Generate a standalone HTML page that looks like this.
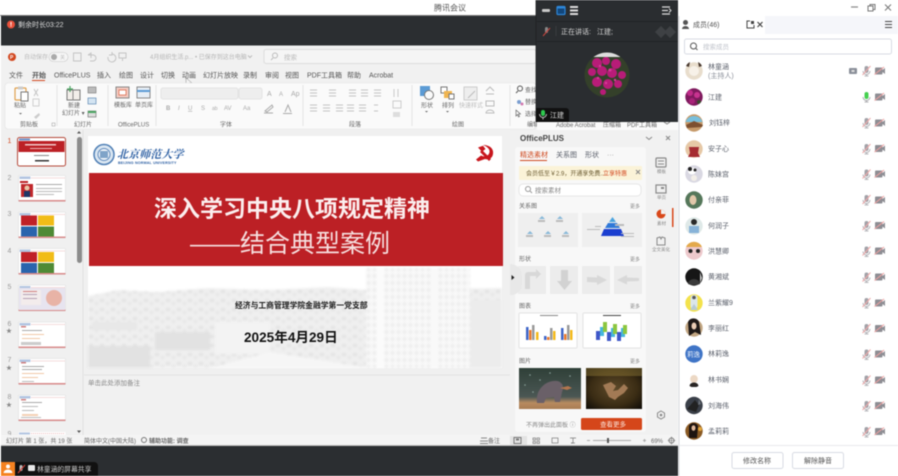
<!DOCTYPE html>
<html lang="zh-CN"><head><meta charset="utf-8"><title>腾讯会议</title>
<style>
html,body{margin:0;padding:0;width:898px;height:476px;overflow:hidden;background:#fff}
svg{display:block;filter:blur(.42px)}
text{font-family:"Liberation Sans","Noto Sans CJK SC",sans-serif;font-size:7px;fill:#555}
.g{fill:#999}.l{fill:#bbb}
.n{font-size:7px;fill:#5a5f6a}
.s{font-size:6px;fill:#666}
</style></head><body>
<svg width="898" height="476" viewBox="0 0 898 476" xmlns="http://www.w3.org/2000/svg">
<defs>
<g id="mic"><rect x="-2" y="-5" width="4" height="7" rx="2" fill="#a2a2a8"/><path d="M-3.500 0a3.500 3.500 0 0 0 7 0M0 3.500V5M-2 5H2" stroke="#a2a2a8" fill="none" stroke-width=".8"/><path d="M-4 4L4 -5" stroke="#efa9a9" stroke-width="1"/></g>
<g id="cam"><rect x="-5" y="-3.500" width="7.500" height="7" rx="1" fill="#8e8e94"/><path d="M2.500 -1L5 -3V3L2.500 1Z" fill="#8e8e94"/><path d="M-5.500 3.500L4 -4" stroke="#efa0a0" stroke-width="1"/></g>
<pattern id="win" width="6" height="7" patternUnits="userSpaceOnUse"><rect width="6" height="7" fill="#f9f9f9"/><rect x="1" y="1" width="3" height="4" fill="#ebebeb"/></pattern>
<pattern id="city" width="11" height="9" patternUnits="userSpaceOnUse"><rect width="11" height="9" fill="#efefef"/><rect x="1" y="2" width="4" height="3" fill="#e2e2e2"/><rect x="7" y="5" width="3" height="3" fill="#e6e6e6"/></pattern>
<g id="th"><rect x="0" y="0" width="47" height="26" rx="1" fill="#fff" stroke="#dcdcdc" stroke-width=".6"/><rect x="1" y="1" width="11" height="2.500" fill="#b2c4e0"/><path d="M13 2.500H46" stroke="#e5a4a4" stroke-dasharray="1 1" stroke-width=".8"/><rect x="0" y="24.500" width="47" height="1.500" fill="#d98c8c"/></g>
<linearGradient id="el" x1="0" y1="0" x2="0" y2="1"><stop offset="0" stop-color="#2f4038"/><stop offset=".7" stop-color="#4b5754"/><stop offset=".85" stop-color="#b88b60"/><stop offset="1" stop-color="#a97c52"/></linearGradient>
<radialGradient id="br" cx=".5" cy=".5" r=".7"><stop offset="0" stop-color="#5e4a2a"/><stop offset=".6" stop-color="#3a2c14"/><stop offset="1" stop-color="#0e0b07"/></radialGradient>
<clipPath id="fl"><circle cx="607" cy="75" r="22.500"/></clipPath><clipPath id="fl2"><circle cx="694" cy="97" r="8.700"/></clipPath>
</defs>

<rect width="898" height="476" fill="#fff"/>
<rect x="0" y="15" width="537" height="1" fill="#777"/>
<text x="434" y="10.500" style="font-size:8px;fill:#555">腾讯会议</text>
<rect x="1" y="16" width="536" height="29.500" fill="#2b2e31"/>
<circle cx="11" cy="24.500" r="4" fill="#e8503a"/><rect x="10.500" y="22" width="1" height="3" fill="#fff"/><rect x="10.500" y="25.500" width="1" height="1" fill="#fff"/>
<text x="18" y="27" style="font-size:7px;fill:#d9d9d9">剩余时长03:22</text>

<rect x="1" y="45.500" width="536" height="400" fill="#f1f1f1"/>
<circle cx="12" cy="57" r="4" fill="#d2471f"/><text x="10" y="59" style="font-size:5px;fill:#fff;font-weight:bold">P</text>
<text x="24" y="59" class="l" style="font-size:6px">自动保存</text>
<rect x="49" y="52.500" width="19" height="9" rx="4.500" fill="#f6f6f6" stroke="#c8c8c8" stroke-width=".6"/><circle cx="54" cy="57" r="3" fill="#aaa"/><text x="60" y="59" class="l" style="font-size:5px">关</text>
<rect x="73.500" y="53" width="7.500" height="8" fill="none" stroke="#c4c4c4"/>
<path d="M88 55l3-2v5M88 55h5a3 3 0 0 1 0 6h-3" stroke="#c4c4c4" fill="none"/><path d="M112 54a4 4 0 1 1-4 3M112 52v3h-3" stroke="#c4c4c4" fill="none"/><path d="M119 53h7v5h-7zM122.500 58v3" stroke="#c4c4c4" fill="none"/>
<text x="150" y="59" style="font-size:6px;fill:#b5b5b5">4月组织生活.p... • 已保存到这台电脑</text>
<path d="M248 55.500l2 2 2-2" stroke="#bbb" fill="none"/>
<rect x="264" y="49.500" width="272" height="14" rx="2" fill="#f5f5f5" stroke="#dcdcdc"/>
<circle cx="275" cy="55.500" r="2.500" fill="none" stroke="#bbb"/><path d="M273 58l-2 2" stroke="#bbb"/><text x="284" y="59.500" style="font-size:6.500px;fill:#bbb">搜索</text>

<text x="9" y="77.500">文件</text><text x="32" y="77.500" style="font-weight:bold">开始</text><text x="54" y="77.500">OfficePLUS</text><text x="97" y="77.500">插入</text><text x="119" y="77.500">绘图</text><text x="140" y="77.500">设计</text><text x="161" y="77.500">切换</text><text x="182" y="77.500">动画</text><text x="203" y="77.500">幻灯片放映</text><text x="243" y="77.500">录制</text><text x="265" y="77.500">审阅</text><text x="285" y="77.500">视图</text><text x="307" y="77.500">PDF工具箱</text><text x="347" y="77.500">帮助</text><text x="369" y="77.500">Acrobat</text>
<rect x="32" y="80" width="13" height="1" fill="#d2471f"/>
<path d="M186 78v8l2-2 2 3 1-1-2-3h3z" fill="#f4f4f4" stroke="#888" stroke-width=".5"/>

<rect x="5" y="83" width="531" height="46" rx="3" fill="#fafafa" stroke="#e4e4e4" stroke-width=".6"/>
<g stroke="#e4e4e4"><path d="M57 85v41M108 85v41M156 85v41M303 85v41M412 85v41M510 85v41"/></g>
<rect x="15" y="88" width="11" height="12" rx="1" fill="none" stroke="#e0a14e" stroke-width="1.200"/><rect x="18" y="86.500" width="5" height="3" fill="#ccc"/><rect x="21" y="92" width="7" height="9" fill="#fff" stroke="#777"/>
<text x="14" y="107.500" class="s">粘贴</text><path d="M19 113h3l-1.500 1.500z" fill="#666"/>
<path d="M34 89l4 7M38 89l-4 7" stroke="#c4c4c4"/><rect x="33" y="99" width="6" height="7" fill="none" stroke="#d0d0d0"/><path d="M34 117l5-4 1 2-4 4z" fill="#ccc"/>
<text x="20" y="126.500" class="s">剪贴板</text><rect x="52" y="123" width="3" height="3" fill="none" stroke="#999" stroke-width=".5"/>
<rect x="67" y="90" width="13" height="10" fill="#f2eeea" stroke="#777"/><path d="M70 86v6M67 89h6" stroke="#4ba562" stroke-width="1.200"/><path d="M73 90v10" stroke="#888"/>
<text x="68" y="107.500" class="s">新建</text><text x="62" y="115" class="s">幻灯片 ▾</text>
<rect x="88" y="87" width="8" height="6" fill="#bbb" stroke="#777" stroke-width=".6"/><rect x="88" y="98" width="8" height="6" fill="#d4e4f2" stroke="#4a7ba8" stroke-width=".6"/><rect x="88" y="111" width="8" height="6" fill="#ddd" stroke="#666" stroke-width=".6"/><rect x="88" y="111" width="8" height="2" fill="#4ba562"/>
<text x="74" y="126.500" class="s">幻灯片</text>
<rect x="116" y="87" width="13" height="11" fill="#f3c9c0" stroke="#888"/><rect x="119" y="90" width="7" height="5" fill="#fff" stroke="#d2471f" stroke-width=".6"/>
<rect x="137" y="87" width="13" height="11" fill="#e6eef6" stroke="#888"/><rect x="137" y="90" width="13" height="2" fill="#5b9bd5"/>
<text x="114" y="107" class="s">模板库</text><text x="135" y="107" class="s">单页库</text>
<text x="118" y="126.500" class="s">OfficePLUS</text>
<rect x="161" y="88" width="77" height="11" rx="2" fill="#eee" stroke="#e3e3e3"/><rect x="239" y="88" width="23" height="11" rx="2" fill="#eee" stroke="#e3e3e3"/>
<text x="267" y="96" style="font-size:7px;fill:#aaa">A</text><text x="279" y="96" style="font-size:6px;fill:#aaa">A</text><text x="291" y="96" style="font-size:7px;fill:#aaa">Ap</text>
<text x="166" y="110" style="font-size:6px;fill:#aaa;font-weight:bold">B</text><text x="178" y="110" style="font-size:6px;fill:#aaa;font-style:italic">I</text><text x="188" y="110" style="font-size:6px;fill:#aaa;text-decoration:underline">U</text><text x="201" y="110" style="font-size:6px;fill:#aaa">S</text><text x="212" y="110" style="font-size:5px;fill:#aaa">ab</text><text x="224" y="110" style="font-size:6px;fill:#aaa">AV</text><text x="243" y="110" style="font-size:6px;fill:#aaa">Aa</text>
<path d="M265 111l7-6 1 2-6 5zM264 113h9M285 112l3-7 3 7M283 113.500h9" stroke="#aaa" fill="none"/>
<text x="220" y="126.500" class="s">字体</text>
<g stroke="#c4c4c4" stroke-width=".9"><path d="M310 90h7M310 93h7M310 96h7M329 90h7M329 93h7M329 96h7M349 90h7M349 93h7M349 96h7M361 90h7M361 93h7M361 96h7M374 90h7M374 93h7M374 96h7M394 89v8M398 89v8"/>
<path d="M310 105h7M310 108h7M310 111h7M323 105h7M323 108h7M323 111h7M336 105h7M336 108h7M336 111h7M347 105h7M347 108h7M347 111h7M359 105h7M359 108h7M359 111h7M374 105h4M374 111h4"/></g>
<rect x="393" y="101" width="8" height="7" fill="none" stroke="#ccc"/><rect x="393" y="112" width="7" height="5" fill="#ddd"/>
<text x="349" y="126.500" class="s">段落</text>
<rect x="420" y="86" width="10" height="10" fill="#5b9bd5"/><circle cx="429" cy="95" r="4.500" fill="#fafafa" stroke="#777"/>
<text x="421" y="107.500" class="s">形状</text><path d="M425 111h3l-1.500 1.500z" fill="#666"/>
<rect x="441" y="87" width="6" height="6" fill="#fff" stroke="#777"/><rect x="444" y="91" width="8" height="7" fill="#f0b550"/><rect x="449" y="94" width="5" height="5" fill="#fff" stroke="#777"/>
<text x="442" y="107.500" class="s">排列</text><path d="M446 111h3l-1.500 1.500z" fill="#666"/>
<rect x="464" y="87" width="13" height="13" fill="#eee" stroke="#ccc"/><path d="M468 98l7-7" stroke="#bbb"/>
<text x="459" y="107.500" class="s" style="fill:#bbb">快速样式</text>
<path d="M486 91l4-4 4 4M486 94h8M486 101h8v5h-8zM486 113a4 3 0 0 1 8 0z" stroke="#bbb" fill="none"/>
<text x="452" y="126.500" class="s">绘图</text>
<circle cx="520" cy="88.500" r="2.500" fill="none" stroke="#555"/><path d="M518 91l-2 2" stroke="#555"/><text x="525" y="92" class="s">查找</text>
<circle cx="519" cy="102" r="2" fill="#7a9ed0"/><circle cx="522" cy="104" r="1.500" fill="#d27ab0"/><text x="525" y="104" class="s">替换</text>
<path d="M516 110v6l1.500-1.500 1 2.500 1-.5-1-2.500h2z" fill="none" stroke="#555" stroke-width=".6"/><text x="525" y="116" class="s">选择</text>
<text x="527" y="126.500" class="s">编辑</text>
<rect x="537" y="122" width="141" height="8" fill="#fafafa"/><text x="556" y="127" class="s">Adobe Acrobat</text><text x="603" y="127" class="s">压缩箱</text><text x="627" y="127" class="s">PDF工具箱</text><path d="M664 122l3 2 3-2" stroke="#888" fill="none"/>

<rect x="1" y="130" width="80" height="305" fill="#f0f0f0"/>
<rect x="77" y="137" width="5" height="126" rx="2.500" fill="#8c8c8c"/>
<path d="M79 131l-2 2.500h4zM79 433l-2-2.500h4z" fill="#555"/>
<path d="M83 130v305" stroke="#e0e0e0"/>
<text x="7.500" y="143" style="fill:#d2471f">1</text>
<text x="7.500" y="180" class="g">2</text><text x="7.500" y="216" class="g">3</text><text x="7.500" y="253" class="g">4</text><text x="7.500" y="289" class="g">5</text><text x="7.500" y="326" class="g">6</text><text x="7.500" y="362" class="g">7</text><text x="7.500" y="399" class="g">8</text><text x="7.500" y="436" class="g">9</text>
<text x="6" y="333" style="font-size:6px;fill:#888">★</text><text x="6" y="370" style="font-size:6px;fill:#888">★</text><text x="6" y="407" style="font-size:6px;fill:#888">★</text>
<rect x="17.500" y="137.500" width="48" height="28.500" rx="2" fill="#fff" stroke="#b5493a" stroke-width="1"/><rect x="18.500" y="141" width="46" height="11" fill="#bc2025"/><rect x="25" y="144" width="31" height="1.500" fill="#f2c9c9"/><rect x="30" y="148" width="22" height="1" fill="#f0b7b7"/><rect x="34" y="155" width="15" height="1" fill="#888"/><rect x="35" y="160" width="14" height="1.500" fill="#333"/><rect x="19" y="138.500" width="11" height="2" fill="#6f91c8"/>
<use href="#th" x="18.500" y="175.500"/><rect x="20" y="181" width="8" height="2" fill="#bc2025"/><rect x="21" y="184" width="12" height="13" fill="#c0282c"/><circle cx="27" cy="188" r="2.500" fill="#e8c6a8"/><rect x="24" y="191" width="6" height="6" fill="#1f3566"/><rect x="36" y="184" width="26" height="1" fill="#aaa"/><rect x="36" y="188" width="26" height="1" fill="#bbb"/><rect x="36" y="191" width="26" height="1" fill="#bbb"/><rect x="36" y="194" width="18" height="1" fill="#bbb"/>
<use href="#th" x="18.500" y="212"/><rect x="21" y="215.500" width="16" height="10" fill="#c02027"/><rect x="38" y="215.500" width="16" height="10" fill="#f1bc17"/><rect x="21" y="226.500" width="16" height="10" fill="#2a64ad"/><rect x="38" y="226.500" width="16" height="10" fill="#4f8a35"/>
<use href="#th" x="18.500" y="248.500"/><rect x="21" y="252" width="16" height="10" fill="#c02027"/><rect x="38" y="252" width="16" height="10" fill="#f1bc17"/><rect x="21" y="263" width="16" height="10" fill="#2a64ad"/><rect x="38" y="263" width="16" height="10" fill="#4f8a35"/>
<use href="#th" x="18.500" y="285"/><rect x="19" y="288" width="46" height="22" fill="#e7e4ef"/><rect x="21" y="290" width="20" height="15" fill="#f3ecec"/><rect x="23" y="291" width="14" height="1" fill="#d08080"/><rect x="23" y="294" width="14" height="1" fill="#b5a0b5"/><rect x="23" y="298" width="14" height="1" fill="#b5a0b5"/><circle cx="54" cy="298" r="8" fill="#e8b3a6"/>
<use href="#th" x="18.500" y="322"/><rect x="21" y="326" width="5" height="1.500" fill="#d08080"/><rect x="22" y="330" width="20" height="1" fill="#aaa"/><rect x="22" y="334" width="22" height="1" fill="#f1c8a8"/><rect x="22" y="338" width="18" height="1" fill="#f1c8a8"/><rect x="21" y="342" width="20" height="3" fill="#ccc"/>
<use href="#th" x="18.500" y="358.500"/><rect x="21" y="362" width="5" height="1.500" fill="#d08080"/><rect x="22" y="366" width="22" height="1" fill="#aaa"/><rect x="22" y="369" width="20" height="1" fill="#aaa"/><rect x="22" y="373" width="22" height="1" fill="#f1c8a8"/><rect x="22" y="377" width="16" height="1" fill="#f1c8a8"/><rect x="22" y="381" width="12" height="1" fill="#bbb"/>
<use href="#th" x="18.500" y="395"/><rect x="21" y="399" width="5" height="1.500" fill="#d08080"/><rect x="22" y="402" width="20" height="1" fill="#aaa"/><rect x="22" y="406" width="16" height="1" fill="#bbb"/><rect x="22" y="410" width="12" height="1" fill="#bbb"/><rect x="22" y="414" width="16" height="2" fill="#f3d0b5"/><rect x="21" y="417" width="20" height="1" fill="#bbb"/>
<rect x="18.500" y="432" width="47" height="4" fill="#fff"/><rect x="19" y="432.500" width="11" height="2" fill="#b2c4e0"/><path d="M31 433.500H65" stroke="#e5a4a4" stroke-dasharray="1 1" stroke-width=".8"/>

<rect x="84" y="130" width="426" height="245" fill="#f0f0f0"/>
<rect x="88" y="136" width="414" height="232" fill="#fff"/>
<g style="filter:blur(1px)">
<path d="M88 296l30-6 40 2 50-4 60 2 60-3 40 3 134-2v80H88z" fill="url(#city)"/>
<rect x="366" y="268" width="104" height="100" fill="url(#win)"/>
<rect x="376" y="268" width="8" height="100" fill="#fbfbfb"/>
<rect x="430" y="268" width="7" height="100" fill="#f9f9f9"/>
<rect x="215" y="322" width="55" height="32" fill="#f3f3f3"/>
<rect x="88" y="346" width="62" height="22" fill="#e2e2e2"/>
<path d="M210 368l60-16 100 16z" fill="#f6f6f6"/>
<rect x="92" y="322" width="45" height="8" fill="#e8e8e8"/>
<rect x="155" y="332" width="55" height="18" fill="#e2e2e2"/>
<rect x="470" y="300" width="32" height="68" fill="#ececec"/>
</g>
<rect x="89" y="173" width="414" height="93" fill="#bc2025"/>
<circle cx="104" cy="154.500" r="10" fill="#dbe7f2" stroke="#4f7fb5" stroke-width="1.500"/><circle cx="104" cy="154.500" r="6" fill="#f2f6fa" stroke="#5d88bb" stroke-width="1"/><rect x="100" y="151" width="8" height="7" fill="#7fa3c8"/>
<text x="117" y="158" style="font-family:'Liberation Serif','Noto Serif CJK SC',serif;font-size:11px;fill:#2c5fa3;font-style:italic;font-weight:bold;letter-spacing:.1px">北京师范大学</text>
<text x="118" y="164" style="font-size:3.600px;fill:#2c5fa3;font-weight:bold;letter-spacing:.2px">BEIJING NORMAL UNIVERSITY</text>
<path d="M483 145C490 145 494 149 493 154C492.500 158 489 160 485 159L478 161.500L476 159.500L481 155.500C484.500 157.500 489 156 489.500 152C490 149 487 146.500 483 145Z" fill="#c8161d"/>
<path d="M478 147.500L483 145.800L485.500 149L482 151.800Z" fill="#c8161d"/><path d="M482 150L491 159L489 161L480 152Z" fill="#c8161d"/>

<text x="154" y="216.500" style="font-size:23px;font-weight:bold;fill:#fbeeee">深入学习中央八项规定精神</text>
<text x="190" y="252" style="font-size:25px;fill:#f6dede">——结合典型案例</text>
<text x="235" y="308" style="font-size:7.800px;font-weight:bold;fill:#1c1c1c">经济与工商管理学院金融学第一党支部</text>
<text x="244" y="342" style="font-size:13.600px;font-weight:bold;fill:#111">2025年4月29日</text>

<path d="M84 375H510" stroke="#e2e2e2"/>
<text x="88" y="385" style="font-size:6.500px;fill:#888">单击此处添加备注</text>
<rect x="1" y="435" width="536" height="10" fill="#f4f4f4"/>
<rect x="1" y="445" width="536" height="1" fill="#bcbcbc"/>
<text x="6" y="443" class="s">幻灯片 第 1 张，共 19 张</text>
<text x="84" y="443" class="s">简体中文(中国大陆)</text>
<circle cx="144" cy="440" r="2.500" fill="none" stroke="#777"/>
<text x="149" y="443" class="s" style="font-weight:bold">辅助功能: 调查</text>
<path d="M481 438h6M480 441h8M480 443.500h8" stroke="#888"/>
<text x="488" y="443" class="s">备注</text>

<rect x="510" y="130" width="168" height="305" fill="#f1f1f1"/>
<rect x="510" y="435" width="168" height="10" fill="#f4f4f4"/>
<rect x="510" y="445" width="168" height="1" fill="#bcbcbc"/>
<text x="520" y="141" style="font-weight:bold;font-size:8px;fill:#444">OfficePLUS</text>
<path d="M646 137l3 2.500 3-2.500" stroke="#888" fill="none"/><path d="M666 136l4 4M670 136l-4 4" stroke="#888"/>
<rect x="515" y="147" width="131" height="285" rx="3" fill="#f8f8f8"/>
<text x="520" y="157" style="fill:#cf4a20">精选素材</text><text x="556" y="157" class="n">关系图</text><text x="585" y="157" class="n">形状</text><text x="607" y="157" class="g">···</text>
<rect x="520" y="160" width="27" height="1" fill="#cf4a20"/>
<rect x="519" y="166" width="123" height="14" rx="1" fill="#fbf3d8"/>
<text x="526" y="175.500" style="font-size:6px;fill:#6a5a30">会员低至￥2.9，开通享免费...</text><text x="603" y="175.500" style="font-size:6px;fill:#d2471f">立享特惠</text>
<path d="M636 170l4 4M640 170l-4 4" stroke="#888"/>
<rect x="519" y="184" width="122" height="12" rx="4" fill="#fff" stroke="#e6e6e6"/><circle cx="528" cy="189" r="2.500" fill="none" stroke="#999"/><path d="M530 191l2 2" stroke="#999"/><text x="535" y="192.500" style="font-size:6.500px;fill:#888">搜索素材</text>
<text x="519" y="208" class="s">关系图</text><text x="630" y="208" style="font-size:5px;fill:#888">更多</text>
<rect x="518" y="213" width="60" height="34" fill="#efefef"/><rect x="582" y="213" width="60" height="34" fill="#efefef"/>
<g fill="#88b8d8"><path d="M539 219l3-3 3 3z"/><path d="M557 219l3-3 3 3z"/><path d="M527 234l3-3 3 3z"/><path d="M545 234l3-3 3 3z"/><path d="M563 234l3-3 3 3z"/></g>
<g fill="#bbb"><rect x="538" y="220" width="7" height="2"/><rect x="556" y="220" width="7" height="2"/><rect x="526" y="235" width="7" height="2"/><rect x="544" y="235" width="7" height="2"/><rect x="562" y="235" width="7" height="2"/></g>
<path d="M609 222l3.500-5 3.500 5z" fill="#4aa3df"/><path d="M605 228l3-5h9l3 5z" fill="#2f78d8"/><path d="M601 236l3-7h17l3 7z" fill="#1b3fd0"/>
<g fill="#bbb"><rect x="587" y="229" width="13" height="1"/><rect x="595" y="226" width="6" height="1"/><rect x="615" y="224" width="9" height="2"/><rect x="621" y="233" width="13" height="1"/><rect x="621" y="236" width="13" height="1"/></g>
<text x="519" y="261" class="s">形状</text><text x="630" y="261" style="font-size:5px;fill:#888">更多</text>
<rect x="518" y="266" width="28" height="28" fill="#ececec"/><rect x="550" y="266" width="28" height="28" fill="#ececec"/><rect x="582" y="266" width="28" height="28" fill="#ececec"/><rect x="614" y="266" width="28" height="28" fill="#ececec"/>
<path d="M525 289v-14a3 3 0 0 1 3-3h8v-3l5 5-5 5v-3h-6v13z" fill="#d8d8d8"/>
<path d="M561 270h7v11h4l-7.500 9-7.500-9h4z" fill="#d2d2d2"/>
<path d="M587 277l10 .5v-2.500l10 5-10 5v-2.500l-10-.5z" fill="#d8d8d8"/>
<path d="M617 280l10-5v2.500l12 .5v3l-12 .5v3z" fill="#d8d8d8"/>
<path d="M510 264a12 12 0 0 1 12 12v8a11 11 0 0 1-12 11z" fill="#e8e8e8"/><path d="M511.500 275l3 2.500-3 2.500z" fill="#222"/>
<text x="519" y="308" class="s">图表</text><text x="630" y="308" style="font-size:5px;fill:#888">更多</text>
<rect x="519" y="313" width="58" height="35" rx="1" fill="#fff" stroke="#e3e3e3"/><rect x="583" y="313" width="58" height="35" rx="1" fill="#fff" stroke="#e3e3e3"/>
<rect x="540" y="315" width="18" height="1" fill="#888"/><rect x="526" y="327" width="2.500" height="13" fill="#3f66c8"/><rect x="529" y="330" width="2.500" height="10" fill="#e9792b"/><rect x="532" y="325" width="2.500" height="15" fill="#9a9a9a"/><rect x="536" y="332" width="2.500" height="8" fill="#f3b91a"/>
<rect x="544" y="336" width="2.500" height="4" fill="#3f66c8"/><rect x="547" y="337" width="2.500" height="3" fill="#e9792b"/><rect x="550" y="328" width="2.500" height="12" fill="#9a9a9a"/><rect x="553" y="331" width="2.500" height="9" fill="#f3b91a"/>
<rect x="561" y="328" width="2.500" height="12" fill="#3f66c8"/><rect x="564" y="334" width="2.500" height="6" fill="#e9792b"/><rect x="567" y="325" width="2.500" height="15" fill="#9a9a9a"/><rect x="570" y="330" width="2.500" height="10" fill="#f3b91a"/>
<rect x="603" y="315" width="18" height="1" fill="#444"/><rect x="596" y="331" width="4" height="9" fill="#3f57c8"/><rect x="600" y="327" width="4" height="9" fill="#45b7dd"/><rect x="603" y="322" width="4" height="10" fill="#8cc63f"/><rect x="607" y="332" width="4" height="9" fill="#3f57c8"/><rect x="611" y="328" width="4" height="9" fill="#45b7dd"/><rect x="613" y="324" width="4" height="10" fill="#8cc63f"/><rect x="617" y="332" width="4" height="9" fill="#3f57c8"/><rect x="621" y="328" width="4" height="9" fill="#45b7dd"/><rect x="623" y="325" width="4" height="9" fill="#8cc63f"/>
<text x="519" y="363" class="s">图片</text><text x="630" y="363" style="font-size:5px;fill:#888">更多</text>
<rect x="519" y="368" width="62" height="41" fill="url(#el)"/>
<path d="M537 403c-1-10 3-15 8-19 6-4 14-4 16-1 3 2 2 7 1 9l-2 10h-5l-1-5-8 1-2 5z" fill="#6a6068"/><path d="M560 388l8-2 4 2-5 2z" fill="#b3754e"/><g fill="#8aa09a"><circle cx="530" cy="375" r=".8"/><circle cx="540" cy="380" r=".8"/><circle cx="550" cy="373" r=".8"/><circle cx="525" cy="385" r=".8"/><circle cx="533" cy="392" r=".8"/><circle cx="570" cy="376" r=".8"/></g>
<rect x="586" y="368" width="56" height="41" fill="url(#br)"/><rect x="586" y="368" width="56" height="8" fill="#8a7434" opacity=".5"/>
<path d="M603 385l8-3 5 4-3 5 5-1 6-6 4 4-4 5-6 4-3 3-6-3-3-6z" fill="#a27a55"/>
<text x="526" y="427" style="font-size:6px;fill:#888">不再弹出此面板 ⓘ</text>
<rect x="581" y="418" width="61" height="12" rx="1.500" fill="#d5461a"/><text x="600" y="426.500" style="font-size:6.500px;fill:#fbe4da">查看更多</text>
<rect x="656" y="158" width="10" height="9" rx="1" fill="none" stroke="#888" stroke-width="1.200"/><path d="M658 161h6M658 164h6" stroke="#888"/><text x="657" y="173" style="font-size:4.500px;fill:#888">模板</text>
<rect x="656" y="185" width="10" height="8" fill="none" stroke="#888" stroke-width="1.200"/><rect x="661" y="187" width="3" height="2" fill="#888"/><text x="657" y="199" style="font-size:4.500px;fill:#888">单页</text>
<circle cx="661" cy="214" r="4.500" fill="#d9481a"/><path d="M661 214V209.500A4.500 4.500 0 0 1 665.500 214z" fill="#f2f2f2"/><text x="657" y="225" style="font-size:4.500px;fill:#888">素材</text>
<rect x="672" y="208" width="1.500" height="19" fill="#d9481a"/>
<path d="M657 238l3-1 1 2 1-2 3 1v7h-8z" fill="none" stroke="#888"/><text x="652" y="251" style="font-size:4.500px;fill:#888">全文美化</text>
<path d="M661 411l3.500 2v4l-3.500 2-3.500-2v-4z" fill="none" stroke="#888"/><circle cx="661" cy="415" r="1.300" fill="#888"/>
<rect x="510" y="436" width="17" height="9" fill="#e3e3e3"/><rect x="514" y="437.500" width="7" height="6" fill="none" stroke="#777"/><rect x="516" y="438.500" width="3" height="2" fill="#777"/>
<g fill="none" stroke="#777" stroke-width=".7"><rect x="533" y="438" width="2.500" height="2"/><rect x="537" y="438" width="2.500" height="2"/><rect x="533" y="441.500" width="2.500" height="2"/><rect x="537" y="441.500" width="2.500" height="2"/><rect x="552" y="438" width="6" height="5"/><path d="M570 438h6M573 438v5h-2"/><path d="M571 443h4"/></g>
<path d="M587 440.500h3M593 440.500h38M643 440.500h3M644.500 439v3" stroke="#aaa"/><rect x="607" y="438" width="2" height="5" fill="#555"/>
<text x="651" y="443" class="s">69%</text>
<circle cx="671.500" cy="440.500" r="2.500" fill="none" stroke="#777"/><path d="M671.500 436.500v8M667.500 440.500h8" stroke="#777" stroke-width=".6"/>

<rect x="1" y="446" width="677" height="30" fill="#2b2e31"/>
<rect x="1" y="462" width="14" height="14" fill="#f58220"/><circle cx="8" cy="466.500" r="2" fill="#fff"/><path d="M3.500 473a4.500 3.500 0 0 1 9 0z" fill="#fff"/>
<path d="M15 462H94a4 4 0 0 1 4 4V476H15z" fill="#111"/>
<rect x="19.500" y="465" width="3" height="6" rx="1.500" fill="#bbb"/><path d="M18 473l7-8" stroke="#d8433a" stroke-width="1"/>
<rect x="28" y="465" width="7" height="6" rx="1" fill="#e8e8e8"/><text x="37" y="471.500" style="font-size:6.800px;fill:#ccc">林童涵的屏幕共享</text>

<rect x="536" y="0" width="142" height="122" fill="#2a2d30"/>
<path d="M536 0V122M537 21.500H678M537 41.500H678" stroke="#1e2022" stroke-width=".8"/>
<rect x="542" y="9" width="8" height="3" rx="1" fill="#c8c8c8"/>
<rect x="557" y="6.500" width="8" height="8" rx="1" fill="#12467a" stroke="#2d86d8" stroke-width="1.200"/><rect x="557" y="6.500" width="8" height="2" fill="#2d86d8"/>
<rect x="570" y="6" width="8" height="2" fill="#ddd"/><rect x="570" y="9.500" width="8" height="2" fill="#ddd"/><rect x="570" y="13" width="8" height="2" fill="#ddd"/>
<path d="M662 7h8M662 10.500h6M662 14h8" stroke="#ddd" stroke-width="1.200"/><path d="M669 8.500l2 2-2 2" stroke="#ddd" fill="none"/>
<rect x="545" y="27" width="3" height="6" rx="1.500" fill="#888"/><path d="M543 36l7-8" stroke="#c9453e" stroke-width="1"/>
<path d="M556 26v10" stroke="#3a3d40"/>
<text x="561" y="34" style="fill:#d5d5d5">正在讲话:</text><text x="597" y="34" style="fill:#d5d5d5">江建;</text>
<path d="M655 32l6-6 6 6-6 6zM664 32l6-6 6 6-6 6z" fill="#3e4144"/>
<g clip-path="url(#fl)"><rect x="584" y="52" width="46" height="46" fill="#34402a"/><rect x="590" y="52" width="30" height="5" fill="#ddd"/>
<g fill="#b81c78"><circle cx="597" cy="63" r="5"/><circle cx="606" cy="61" r="4"/><circle cx="616" cy="64" r="5"/><circle cx="592" cy="72" r="4"/><circle cx="602" cy="71" r="5"/><circle cx="612" cy="73" r="5"/><circle cx="622" cy="75" r="4"/><circle cx="597" cy="82" r="5"/><circle cx="608" cy="84" r="5"/><circle cx="618" cy="84" r="4"/><circle cx="603" cy="92" r="3"/></g>
<g fill="#d93a9a"><circle cx="600" cy="66" r="1.200"/><circle cx="610" cy="70" r="1.500"/><circle cx="598" cy="78" r="1.200"/><circle cx="615" cy="80" r="1.200"/><circle cx="606" cy="83" r="1.200"/></g></g>
<path d="M536 108H566a3 3 0 0 1 3 3V122H536z" fill="#111"/>
<rect x="541" y="110" width="4" height="6" rx="2" fill="#2fc94f"/><path d="M539.500 114a3.500 3.500 0 0 0 7 0M543 117.500v2" stroke="#ddd" fill="none" stroke-width=".8"/><text x="550" y="117.500" style="fill:#ddd">江建</text>

<rect x="678" y="0" width="220" height="476" fill="#fff"/>
<path d="M851 7h7" stroke="#888" stroke-width="1.200"/><rect x="868" y="6" width="5" height="5" fill="none" stroke="#777"/><path d="M870 6v-1.500h5v5h-2" fill="none" stroke="#777"/><path d="M885 4.500l6 6M891 4.500l-6 6" stroke="#777"/>
<rect x="678.500" y="16" width="1" height="460" fill="#d4d6db"/>
<rect x="765" y="16" width="133" height="18" fill="#f5f6fa"/>
<circle cx="685.500" cy="22.500" r="2.500" fill="#555"/><path d="M682 29a3.500 3 0 0 1 7 0z" fill="#555"/>
<text x="693" y="27">成员(46)</text>
<path d="M750 21h-3v7h7v-3" fill="none" stroke="#444"/><rect x="751" y="21" width="3" height="3" fill="#444"/><path d="M757.500 22l5 5M762.500 22l-5 5" stroke="#444" stroke-width="1.200"/>
<path d="M885 21.500h7M885 24.500h7M885 27.500h7" stroke="#444"/>
<rect x="684.500" y="39" width="207" height="15" rx="2" fill="#fff" stroke="#d8dbe3"/>
<circle cx="693.500" cy="46" r="3" fill="none" stroke="#555"/><path d="M696 48.500l1.500 1.500" stroke="#555"/>
<text x="703" y="49" style="font-size:6.500px;fill:#c0c3cb">搜索成员</text>

<circle cx="694" cy="71" r="8.700" fill="#e8ddcc"/><circle cx="694" cy="71" r="5" fill="#f7f1e8"/><path d="M686 66a8 8 0 0 1 4-4l-1 5zM702 66a8 8 0 0 0-4-4l1 5z" fill="#4a3a30"/>
<text x="708" y="69" class="n">林童涵</text><text x="708" y="78" class="n" style="fill:#8a8f99">(主持人)</text>
<rect x="849" y="68" width="8" height="6" rx="1" fill="#8a8f99"/><rect x="851.500" y="70" width="3" height="2" fill="#ddd"/>
<g clip-path="url(#fl2)"><rect x="685" y="88" width="18" height="18" fill="#7f1a5e"/><circle cx="690" cy="93" r="3" fill="#bf2a88"/><circle cx="697" cy="95" r="3" fill="#c83390"/><circle cx="692" cy="101" r="3" fill="#a82278"/><circle cx="699" cy="102" r="2" fill="#3a4a2c"/></g>
<text x="708" y="99.500" class="n">江建</text>
<circle cx="694" cy="123" r="8.700" fill="#c69a6a"/><path d="M685.500 122a9 9 0 0 1 17 0z" fill="#78bfdc"/><path d="M686 125l8-4 9 4-1 2-15 1z" fill="#7d5030"/>
<text x="709" y="125" class="n"> 刘钰梓</text>
<circle cx="694" cy="149" r="8.700" fill="#e6c8a6"/><path d="M689 147h10l-1 6 2 4h-12l2-4z" fill="#a52b32"/>
<text x="708" y="151" class="n">安子心</text>
<circle cx="694" cy="174" r="8.700" fill="#d9d8e2"/><ellipse cx="692" cy="171" rx="4" ry="3.500" fill="#fff"/><circle cx="690" cy="169" r="2" fill="#222"/><circle cx="695" cy="170" r="1.500" fill="#222"/><ellipse cx="694" cy="178" rx="3" ry="3" fill="#f3efe8"/>
<text x="708" y="176.500" class="n">陈妹宫</text>
<circle cx="694" cy="200" r="8.700" fill="#55775a"/><ellipse cx="693" cy="200" rx="3.500" ry="5" fill="#e2c8aa"/>
<text x="708" y="202" class="n">付亲菲</text>
<circle cx="694" cy="226" r="8.700" fill="#dfe9e8"/><circle cx="694" cy="222" r="3" fill="#2a2a2a"/><rect x="689" y="226" width="10" height="7" fill="#88b3d8"/>
<text x="708" y="228" class="n">何润子</text>
<circle cx="694" cy="251" r="8.700" fill="#edc9cc"/><path d="M686 247a8.700 8.700 0 0 1 16 0z" fill="#e3a94b"/><circle cx="690.500" cy="251" r="2" fill="#222"/><circle cx="698" cy="251" r="2" fill="#222"/>
<text x="708" y="253.500" class="n">洪慧卿</text>
<circle cx="694" cy="277" r="8.700" fill="#161616"/><path d="M688 284a6 5 0 0 1 12 0l-3 1h-6z" fill="#3a3a3a"/><path d="M700 272l2 6-2 5z" fill="#ccc"/>
<text x="708" y="279" class="n">黄湘斌</text>
<circle cx="694" cy="303" r="8.700" fill="#f3e24b"/><rect x="690.500" y="295" width="7" height="14" rx="3" fill="#dbe6ea"/><circle cx="694" cy="297.500" r="1.800" fill="#555"/><path d="M690 310l4-6 4 6z" fill="#b8cbd4"/>
<text x="708" y="305" class="n">兰紫耀9</text>
<circle cx="694" cy="328" r="8.700" fill="#c2a682"/><path d="M688 322a6 6 0 0 1 11 0l2 13-6-3-6 4z" fill="#1f1a18"/><ellipse cx="694" cy="326" rx="2.500" ry="3.500" fill="#eacdb5"/>
<text x="708" y="330.500" class="n">李丽红</text>
<circle cx="694" cy="354" r="8.700" fill="#3f74c6"/><text x="687" y="356.500" style="font-size:6.500px;fill:#eaf1fb">莉逸</text>
<text x="708" y="356" class="n">林莉逸</text>
<ellipse cx="694" cy="379" rx="3.800" ry="4" fill="#ecd8c4"/><path d="M689.500 386a4.500 3.500 0 0 1 9 0l-2 1h-5z" fill="#2a2624"/>
<text x="708" y="382" class="n">林书娴</text>
<circle cx="694" cy="405.500" r="8.700" fill="#3a3f48"/><path d="M687 409l8-9 4 5-3 7z" fill="#222"/><path d="M699 399l2 5-3 1z" fill="#6a7078"/>
<text x="708" y="408" class="n">刘海伟</text>
<circle cx="694" cy="431" r="8.700" fill="#8a5a24"/><path d="M689 426a5 5 0 0 1 9 0l-1 12h-8z" fill="#1e1410"/><ellipse cx="693.500" cy="428" rx="2" ry="2.800" fill="#e0b89a"/><circle cx="700" cy="429" r="2" fill="#e2a63c"/>
<text x="708" y="433.500" class="n">孟莉莉</text>

<use href="#mic" x="866.500" y="71"/><use href="#cam" x="880" y="71"/>
<rect x="864.500" y="92" width="4" height="7" rx="2" fill="#45d04f"/><path d="M863 97a3.500 3.500 0 0 0 7 0M866.500 100.500V102M864.500 102h4" stroke="#9a9a9f" fill="none" stroke-width=".8"/><use href="#cam" x="880" y="97"/>
<use href="#mic" x="866.500" y="123"/><use href="#cam" x="880" y="123"/>
<use href="#mic" x="866.500" y="149"/><use href="#cam" x="880" y="148.500"/>
<use href="#mic" x="866.500" y="174.500"/><use href="#cam" x="880" y="174"/>
<use href="#mic" x="866.500" y="200"/><use href="#cam" x="880" y="200"/>
<use href="#mic" x="866.500" y="226"/><use href="#cam" x="880" y="225.500"/>
<use href="#mic" x="866.500" y="251.500"/><use href="#cam" x="880" y="251"/>
<use href="#mic" x="866.500" y="277.500"/><use href="#cam" x="880" y="277"/>
<use href="#mic" x="866.500" y="303"/><use href="#cam" x="880" y="303"/>
<use href="#mic" x="866.500" y="329"/><use href="#cam" x="880" y="328.500"/>
<use href="#mic" x="866.500" y="354.500"/><use href="#cam" x="880" y="354"/>
<use href="#mic" x="866.500" y="380.500"/><use href="#cam" x="880" y="380"/>
<use href="#mic" x="866.500" y="406"/><use href="#cam" x="880" y="405.500"/>
<use href="#mic" x="866.500" y="432"/><use href="#cam" x="880" y="431.500"/>

<path d="M679 445.500H898" stroke="#e8e9ec"/>
<rect x="732" y="452.500" width="51" height="16" rx="2" fill="#fff" stroke="#d8dbe3"/><text x="743" y="463">修改名称</text>
<rect x="792.500" y="452.500" width="51" height="16" rx="2" fill="#fff" stroke="#d8dbe3"/><text x="804" y="463">解除静音</text>
</svg>
</body></html>
